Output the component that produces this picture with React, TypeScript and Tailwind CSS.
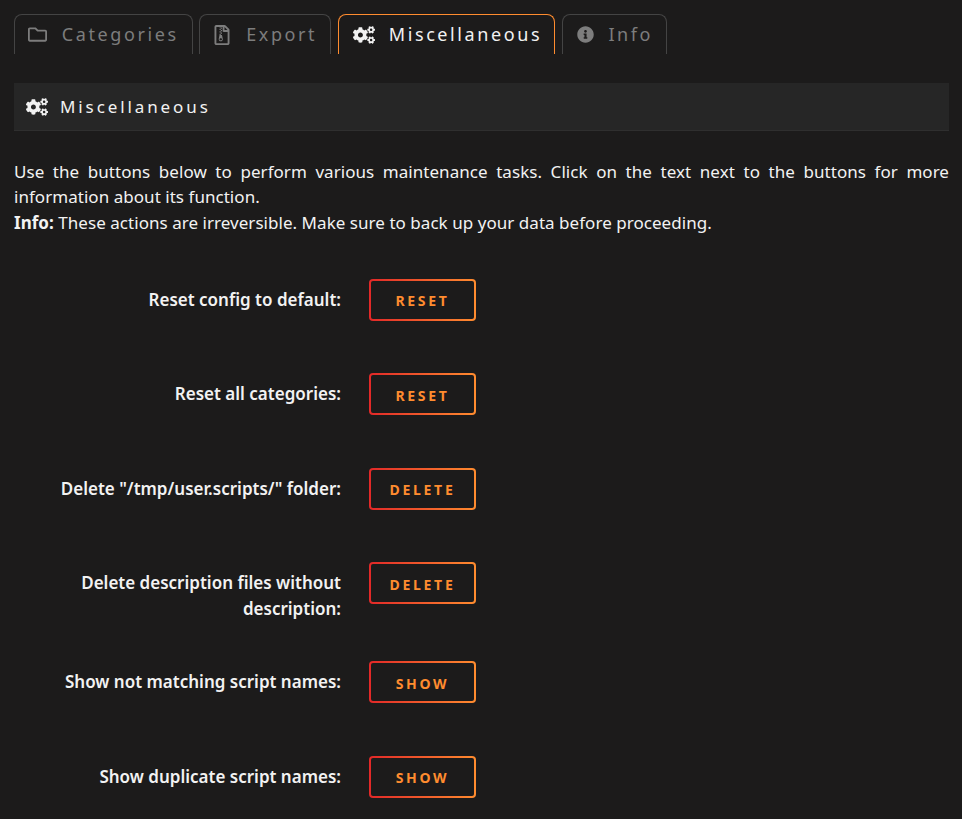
import { FaCogs, FaInfoCircle, FaRegFileArchive, FaRegFolder } from "react-icons/fa";

const tabs = [
  { name: "Categories", icon: <FaRegFolder className="w-[19px] h-[19px]" />, width: "w-[178.6px]", gap: "gap-[15px]" },
  { name: "Export", icon: <FaRegFileArchive className="w-[18px] h-[20px]" />, width: "w-[132px]", gap: "gap-[15px]" },
  { name: "Miscellaneous", icon: <FaCogs className="w-[22px] h-[20px]" />, width: "w-[217.4px] pl-[2px]", gap: "gap-[14px]", active: true },
  { name: "Info", icon: <FaInfoCircle className="w-[17px] h-[17px]" />, width: "w-[105px] pl-[2px]", gap: "gap-[14px]" },
];

const rows = [
  { label: "Reset config to default:", action: "RESET" },
  { label: "Reset all categories:", action: "RESET" },
  { label: 'Delete "/tmp/user.scripts/" folder:', action: "DELETE" },
  { label: "Delete description files without description:", action: "DELETE" },
  { label: "Show not matching script names:", action: "SHOW" },
  { label: "Show duplicate script names:", action: "SHOW" },
];

export default function App() {
  return (
    <div className="h-[819px] overflow-hidden bg-[#1c1b1b] pl-[14px] pr-[13px] pt-[14px] font-['Noto_Sans',sans-serif] text-[#f2f2f2]">
      <div className="flex gap-[6.6px]">
        {tabs.map((tab) => (
          <div
            key={tab.name}
            className={`flex h-[40px] items-center justify-center rounded-t-[8px] border border-b-0 text-[18px] tracking-[2.6px] ${tab.width} ${tab.gap} ${
              tab.active ? "border-[#ff8c2f] text-[#f2f2f2]" : "border-[#444444] text-[#7d7d7d]"
            }`}
          >
            {tab.icon}
            <span>{tab.name}</span>
          </div>
        ))}
      </div>

      <div className="mt-[29px] flex h-[48px] items-center gap-[12px] border-b border-[#2f2f2f] bg-[#262626] pl-[12px] text-[17px] tracking-[2.9px] text-[#f2f2f2]">
        <FaCogs className="w-[22px] h-[20px]" />
        <span>Miscellaneous</span>
      </div>

      <div className="mt-[27.5px] text-justify text-[17px] leading-[25.6px] tracking-[0.04px] text-[#f2f2f2]">
        <p>
          Use the buttons below to perform various maintenance tasks. Click on the text next to the buttons for more
          information about its function.
        </p>
        <p>
          <b>Info:</b> These actions are irreversible. Make sure to back up your data before proceeding.
        </p>
      </div>

      <div className="mt-[43.7px]">
        {rows.map((row) => (
          <div key={row.label + row.action} className="flex items-start gap-[28px]">
            <div className="w-[327px] pt-[8px] pb-[39px] text-right text-[17px] font-semibold leading-[26px] text-[#f2f2f2]">
              {row.label}
            </div>
            <button className="mb-[52.4px] flex h-[42px] w-[107px] items-center justify-center rounded-[4px] border-2 border-transparent pt-[2px] text-[14px] font-bold tracking-[2.7px] text-[#ff8c2f] [background:linear-gradient(#1c1b1b,#1c1b1b)_padding-box,linear-gradient(90deg,#e22828,#ff8c2f)_border-box]">
              {row.action}
            </button>
          </div>
        ))}
      </div>
    </div>
  );
}
